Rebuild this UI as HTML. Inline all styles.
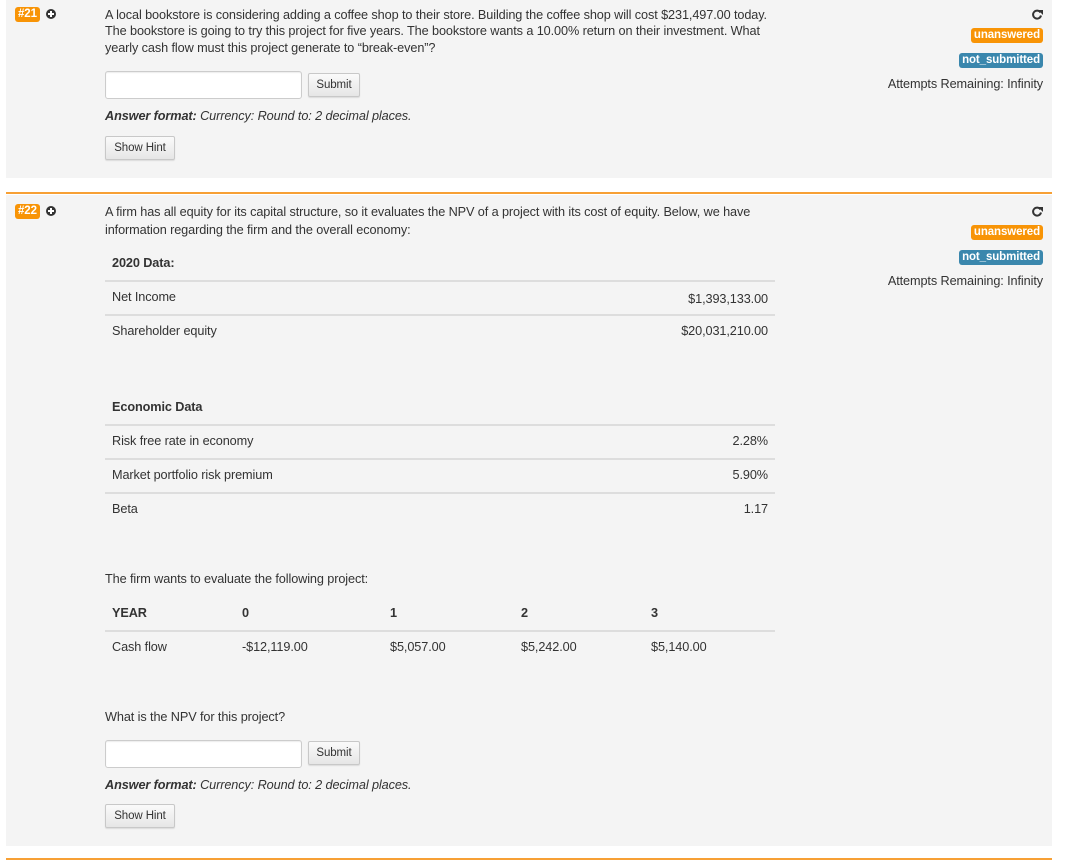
<!DOCTYPE html>
<html><head><meta charset="utf-8"><style>
body{margin:0;width:1072px;height:861px;background:#fff;font-family:"Liberation Sans",Arial,sans-serif;font-size:12.7px;color:#333;position:relative;overflow:hidden;letter-spacing:-0.1px}
.a{position:absolute;white-space:nowrap;line-height:14px}
.panel{position:absolute;left:6px;width:1046px;background:#f4f4f4}
.ol{position:absolute;left:6px;width:1046px;height:2px;background:#f7a035}
.badge{position:absolute;right:29px;background:#f89406;color:#fff;font-weight:bold;font-size:11.5px;line-height:15px;padding:0 3px;border-radius:3px}
.blue{background:#3a87ad}
.circ{position:absolute;width:10px;height:10px;border-radius:50%;background:#333}
.circ:before{content:"";position:absolute;left:2px;top:4px;width:6px;height:2px;background:#fff}
.circ:after{content:"";position:absolute;left:4px;top:2px;width:2px;height:6px;background:#fff}
.inp{position:absolute;width:195px;height:26px;background:#fff;border:1px solid #ccc;border-radius:3px;box-shadow:inset 0 1px 1px rgba(0,0,0,.08)}
.btn{position:absolute;background:linear-gradient(#fafafa,#e6e6e6);border:1px solid #c8c8c8;border-radius:2px;font-size:11.5px;line-height:22px;text-align:center;color:#333;box-shadow:0 1px 1px rgba(0,0,0,.1)}
.hl{position:absolute;left:105px;width:670px;height:2px;background:#ddd}
.r{text-align:right}
b{font-weight:bold}
.ref{position:absolute;width:11px;height:11px}
</style></head><body>

<div class="panel" style="top:0;height:178px"></div>
<div class="ol" style="top:192px"></div>
<div class="panel" style="top:195px;height:651px"></div>
<div class="ol" style="top:858px"></div>

<!-- Q21 -->
<div class="badge" style="left:15px;right:auto;top:7px">#21</div>
<div class="circ" style="left:46px;top:9px"></div>
<div class="a" style="left:105px;top:8px">A local bookstore is considering adding a coffee shop to their store. Building the coffee shop will cost $231,497.00 today.</div>
<div class="a" style="left:105px;top:24px">The bookstore is going to try this project for five years. The bookstore wants a 10.00% return on their investment. What</div>
<div class="a" style="left:105px;top:41px">yearly cash flow must this project generate to “break-even”?</div>
<div class="inp" style="left:105px;top:71px"></div>
<div class="btn" style="left:308px;top:73px;width:50px">Submit</div>
<div class="a" style="left:105px;top:109px;font-style:italic"><b>Answer format:</b> Currency: Round to: 2 decimal places.</div>
<div class="btn" style="left:105px;top:136px;width:68px">Show Hint</div>

<svg class="ref" style="left:1032px;top:9px" viewBox="0 0 11 11"><path d="M8.5 3.5A4 4 0 1 0 9 6.5" fill="none" stroke="#333" stroke-width="2"/><path d="M6 1h5v5z" fill="#333"/></svg>
<div class="badge" style="top:28px">unanswered</div>
<div class="badge blue" style="top:53px">not_submitted</div>
<div class="a r" style="right:29px;top:77px">Attempts Remaining: Infinity</div>

<!-- Q22 -->
<div class="badge" style="left:15px;right:auto;top:204px">#22</div>
<div class="circ" style="left:46px;top:206px"></div>
<div class="a" style="left:105px;top:205px">A firm has all equity for its capital structure, so it evaluates the NPV of a project with its cost of equity. Below, we have</div>
<div class="a" style="left:105px;top:223px">information regarding the firm and the overall economy:</div>

<svg class="ref" style="left:1032px;top:206px" viewBox="0 0 11 11"><path d="M8.5 3.5A4 4 0 1 0 9 6.5" fill="none" stroke="#333" stroke-width="2"/><path d="M6 1h5v5z" fill="#333"/></svg>
<div class="badge" style="top:225px">unanswered</div>
<div class="badge blue" style="top:250px">not_submitted</div>
<div class="a r" style="right:29px;top:274px">Attempts Remaining: Infinity</div>

<div class="a" style="left:112px;top:256px"><b>2020 Data:</b></div>
<div class="hl" style="top:280px"></div>
<div class="a" style="left:112px;top:290px">Net Income</div>
<div class="a r" style="right:304px;top:292px">$1,393,133.00</div>
<div class="hl" style="top:314px"></div>
<div class="a" style="left:112px;top:324px">Shareholder equity</div>
<div class="a r" style="right:304px;top:324px">$20,031,210.00</div>

<div class="a" style="left:112px;top:400px"><b>Economic Data</b></div>
<div class="hl" style="top:424px"></div>
<div class="a" style="left:112px;top:434px">Risk free rate in economy</div>
<div class="a r" style="right:304px;top:434px">2.28%</div>
<div class="hl" style="top:458px"></div>
<div class="a" style="left:112px;top:468px">Market portfolio risk premium</div>
<div class="a r" style="right:304px;top:468px">5.90%</div>
<div class="hl" style="top:492px"></div>
<div class="a" style="left:112px;top:502px">Beta</div>
<div class="a r" style="right:304px;top:502px">1.17</div>

<div class="a" style="left:105px;top:572px">The firm wants to evaluate the following project:</div>
<div class="a" style="left:112px;top:606px"><b>YEAR</b></div>
<div class="a" style="left:242px;top:606px"><b>0</b></div>
<div class="a" style="left:390px;top:606px"><b>1</b></div>
<div class="a" style="left:521px;top:606px"><b>2</b></div>
<div class="a" style="left:651px;top:606px"><b>3</b></div>
<div class="hl" style="top:630px"></div>
<div class="a" style="left:112px;top:640px">Cash flow</div>
<div class="a" style="left:242px;top:640px">-$12,119.00</div>
<div class="a" style="left:390px;top:640px">$5,057.00</div>
<div class="a" style="left:521px;top:640px">$5,242.00</div>
<div class="a" style="left:651px;top:640px">$5,140.00</div>

<div class="a" style="left:105px;top:710px">What is the NPV for this project?</div>
<div class="inp" style="left:105px;top:740px"></div>
<div class="btn" style="left:308px;top:741px;width:50px">Submit</div>
<div class="a" style="left:105px;top:778px;font-style:italic"><b>Answer format:</b> Currency: Round to: 2 decimal places.</div>
<div class="btn" style="left:105px;top:804px;width:68px">Show Hint</div>
</body></html>
